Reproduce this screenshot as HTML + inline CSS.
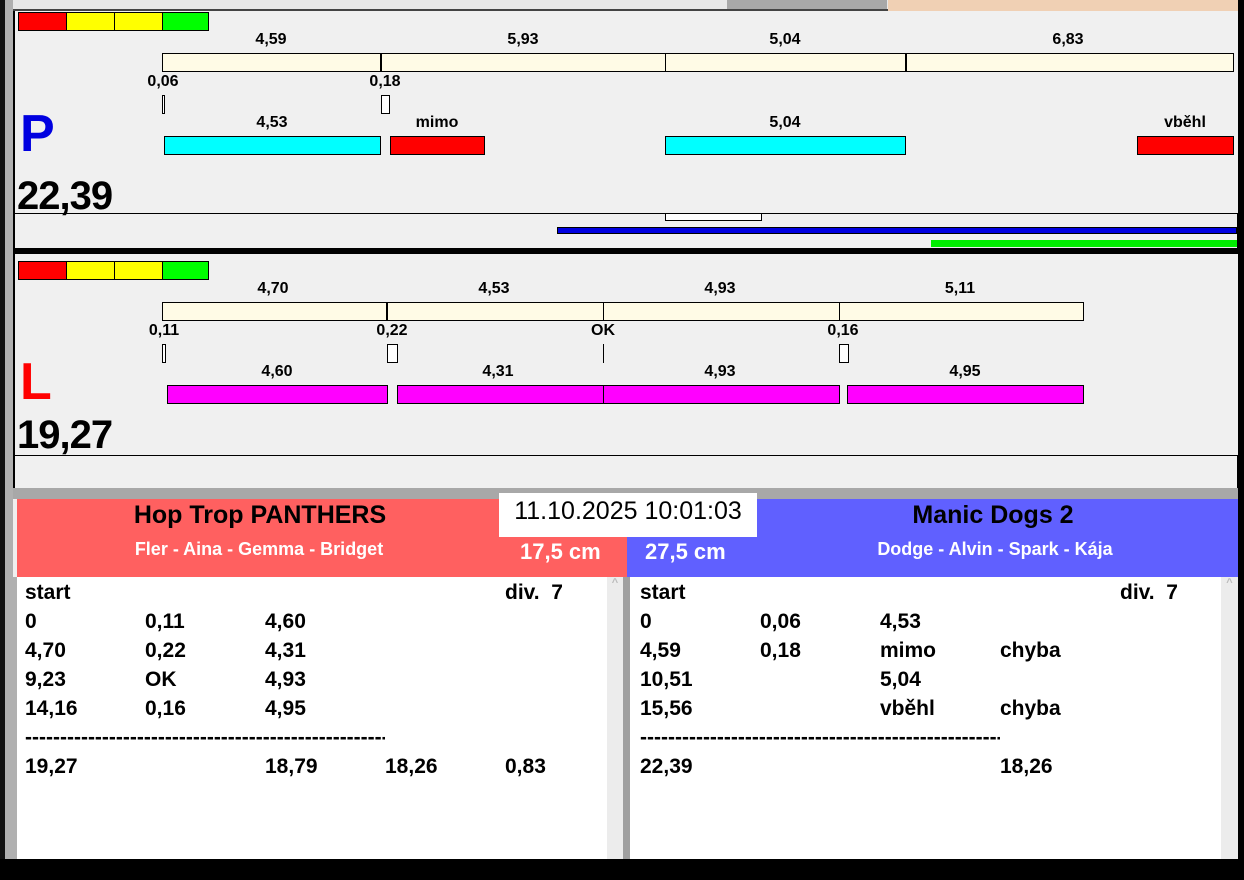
<!DOCTYPE html>
<html><head><meta charset="utf-8"><style>
*{margin:0;padding:0;box-sizing:border-box}
body{width:1244px;height:880px;overflow:hidden;background:#f0f0f0;position:relative;font-family:"Liberation Sans",Arial,sans-serif;font-weight:bold}
.a{position:absolute}
.t{position:absolute;font-size:16px;transform:translateX(-50%);white-space:nowrap;color:#000}
.r{position:absolute;border:1px solid #000}
.row{position:absolute;font-size:21px;white-space:nowrap}
</style></head><body>
<!-- top strip -->
<div class="a" style="left:0;top:0;width:1244px;height:11px;background:#e8e8e8"></div>
<div class="a" style="left:727px;top:0;width:160px;height:9px;background:#a8a8a8"></div>
<div class="a" style="left:888px;top:0;width:352px;height:11px;background:#f0d0b4"></div>
<div class="a" style="left:13px;top:9px;width:875px;height:2px;background:#444"></div>
<!-- left frame -->
<div class="a" style="left:0;top:0;width:5px;height:880px;background:#111"></div>
<div class="a" style="left:5px;top:0;width:8px;height:880px;background:#b0b0b0"></div>
<div class="a" style="left:13px;top:11px;width:2px;height:477px;background:#000"></div>
<div class="a" style="left:1238px;top:0;width:6px;height:880px;background:#000"></div>

<!-- panel P -->
<div class="r" style="left:18px;top:12px;width:49px;height:19px;background:#f00"></div>
<div class="r" style="left:66px;top:12px;width:49px;height:19px;background:#ff0"></div>
<div class="r" style="left:114px;top:12px;width:49px;height:19px;background:#ff0"></div>
<div class="r" style="left:162px;top:12px;width:47px;height:19px;background:#0f0"></div>

<div class="t" style="left:271px;top:31px">4,59</div>
<div class="t" style="left:523px;top:31px">5,93</div>
<div class="t" style="left:785px;top:31px">5,04</div>
<div class="t" style="left:1068px;top:31px">6,83</div>
<div class="r" style="left:162px;top:53px;width:1072px;height:19px;background:#fffbe6"></div>
<div class="a" style="left:380px;top:53px;width:2px;height:19px;background:#000"></div>
<div class="a" style="left:665px;top:53px;width:1px;height:19px;background:#000"></div>
<div class="a" style="left:905px;top:53px;width:2px;height:19px;background:#000"></div>
<div class="t" style="left:163px;top:73px">0,06</div>
<div class="t" style="left:385px;top:73px">0,18</div>
<div class="r" style="left:162px;top:95px;width:3px;height:19px;background:#fff"></div>
<div class="r" style="left:381px;top:95px;width:9px;height:19px;background:#fff"></div>
<div class="a" style="left:20px;top:104px;font-size:52px;color:#0000e0">P</div>
<div class="t" style="left:272px;top:114px">4,53</div>
<div class="t" style="left:437px;top:114px">mimo</div>
<div class="t" style="left:785px;top:114px">5,04</div>
<div class="t" style="left:1185px;top:114px">vběhl</div>
<div class="r" style="left:164px;top:136px;width:217px;height:19px;background:#0ff"></div>
<div class="r" style="left:390px;top:136px;width:95px;height:19px;background:#f00"></div>
<div class="r" style="left:665px;top:136px;width:241px;height:19px;background:#0ff"></div>
<div class="r" style="left:1137px;top:136px;width:97px;height:19px;background:#f00"></div>
<div class="a" style="left:17px;top:174px;font-size:40px;letter-spacing:-1px">22,39</div>
<div class="a" style="left:13px;top:213px;width:1225px;height:36px;border:1px solid #000;border-bottom:none"></div>
<div class="r" style="left:665px;top:213px;width:97px;height:8px;background:#fff"></div>
<div class="a" style="left:557px;top:227px;width:680px;height:7px;background:#0000e0;border:1px solid #000"></div>
<div class="a" style="left:931px;top:240px;width:306px;height:7px;background:#0e0"></div>
<div class="a" style="left:13px;top:248px;width:1225px;height:6px;background:#000"></div>

<!-- panel L -->
<div class="r" style="left:18px;top:261px;width:49px;height:19px;background:#f00"></div>
<div class="r" style="left:66px;top:261px;width:49px;height:19px;background:#ff0"></div>
<div class="r" style="left:114px;top:261px;width:49px;height:19px;background:#ff0"></div>
<div class="r" style="left:162px;top:261px;width:47px;height:19px;background:#0f0"></div>
<div class="t" style="left:273px;top:280px">4,70</div>
<div class="t" style="left:494px;top:280px">4,53</div>
<div class="t" style="left:720px;top:280px">4,93</div>
<div class="t" style="left:960px;top:280px">5,11</div>
<div class="r" style="left:162px;top:302px;width:922px;height:19px;background:#fffbe6"></div>
<div class="a" style="left:386px;top:302px;width:2px;height:19px;background:#000"></div>
<div class="a" style="left:603px;top:302px;width:1px;height:19px;background:#000"></div>
<div class="a" style="left:839px;top:302px;width:1px;height:19px;background:#000"></div>
<div class="t" style="left:164px;top:322px">0,11</div>
<div class="t" style="left:392px;top:322px">0,22</div>
<div class="t" style="left:603px;top:322px">OK</div>
<div class="t" style="left:843px;top:322px">0,16</div>
<div class="r" style="left:162px;top:344px;width:4px;height:19px;background:#fff"></div>
<div class="r" style="left:387px;top:344px;width:11px;height:19px;background:#fff"></div>
<div class="a" style="left:603px;top:344px;width:1px;height:19px;background:#000"></div>
<div class="r" style="left:839px;top:344px;width:10px;height:19px;background:#fff"></div>
<div class="a" style="left:20px;top:352px;font-size:52px;color:#f00">L</div>
<div class="t" style="left:277px;top:363px">4,60</div>
<div class="t" style="left:498px;top:363px">4,31</div>
<div class="t" style="left:720px;top:363px">4,93</div>
<div class="t" style="left:965px;top:363px">4,95</div>
<div class="r" style="left:167px;top:385px;width:221px;height:19px;background:#f0f"></div>
<div class="r" style="left:397px;top:385px;width:443px;height:19px;background:#f0f"></div>
<div class="a" style="left:603px;top:385px;width:1px;height:19px;background:#000"></div>
<div class="r" style="left:847px;top:385px;width:237px;height:19px;background:#f0f"></div>
<div class="a" style="left:17px;top:413px;font-size:40px;letter-spacing:-1px">19,27</div>
<div class="a" style="left:13px;top:455px;width:1225px;height:34px;border:1px solid #000;border-bottom:none"></div>

<!-- lower -->
<div class="a" style="left:13px;top:488px;width:1225px;height:11px;background:#a8a8a8"></div>
<div class="a" style="left:17px;top:499px;width:610px;height:78px;background:#ff6060"></div>
<div class="a" style="left:627px;top:499px;width:611px;height:78px;background:#6060ff"></div>
<div class="a" style="left:499px;top:493px;width:258px;height:44px;background:#fff;font-weight:normal;font-size:25px;text-align:center;line-height:36px">11.10.2025 10:01:03</div>
<div class="t" style="left:260px;top:501px;font-size:25px">Hop Trop PANTHERS</div>
<div class="t" style="left:259px;top:539px;font-size:18px;color:#fff">Fler - Aina - Gemma - Bridget</div>
<div class="a" style="left:520px;top:539px;font-size:22px;color:#fff">17,5 cm</div>
<div class="a" style="left:645px;top:539px;font-size:22px;color:#fff">27,5 cm</div>
<div class="t" style="left:993px;top:501px;font-size:25px">Manic Dogs 2</div>
<div class="t" style="left:995px;top:539px;font-size:18px;color:#fff">Dodge - Alvin - Spark - Kája</div>

<div class="a" style="left:13px;top:577px;width:4px;height:282px;background:#b0b0b0"></div>
<div class="a" style="left:17px;top:577px;width:590px;height:282px;background:#fff"></div>
<div class="a" style="left:607px;top:577px;width:16px;height:282px;background:#ececec;color:#bbb;font-size:11px;text-align:center">^</div>
<div class="a" style="left:623px;top:577px;width:7px;height:282px;background:#a0a0a0"></div>
<div class="a" style="left:630px;top:577px;width:591px;height:282px;background:#fff"></div>
<div class="a" style="left:1221px;top:577px;width:17px;height:282px;background:#ececec;color:#bbb;font-size:11px;text-align:center">^</div>
<div class="a" style="left:0;top:859px;width:1244px;height:21px;background:#000"></div>

<div class="row" style="left:25px;top:581px">start</div><div class="row" style="left:505px;top:581px">div.&nbsp; 7</div>
<div class="row" style="left:25px;top:610px">0</div><div class="row" style="left:145px;top:610px">0,11</div><div class="row" style="left:265px;top:610px">4,60</div>
<div class="row" style="left:25px;top:639px">4,70</div><div class="row" style="left:145px;top:639px">0,22</div><div class="row" style="left:265px;top:639px">4,31</div>
<div class="row" style="left:25px;top:668px">9,23</div><div class="row" style="left:145px;top:668px">OK</div><div class="row" style="left:265px;top:668px">4,93</div>
<div class="row" style="left:25px;top:697px">14,16</div><div class="row" style="left:145px;top:697px">0,16</div><div class="row" style="left:265px;top:697px">4,95</div>
<div class="row" style="left:25px;top:726px;width:360px;overflow:hidden">--------------------------------------------------------</div>
<div class="row" style="left:25px;top:755px">19,27</div><div class="row" style="left:265px;top:755px">18,79</div><div class="row" style="left:385px;top:755px">18,26</div><div class="row" style="left:505px;top:755px">0,83</div>

<div class="row" style="left:640px;top:581px">start</div><div class="row" style="left:1120px;top:581px">div.&nbsp; 7</div>
<div class="row" style="left:640px;top:610px">0</div><div class="row" style="left:760px;top:610px">0,06</div><div class="row" style="left:880px;top:610px">4,53</div>
<div class="row" style="left:640px;top:639px">4,59</div><div class="row" style="left:760px;top:639px">0,18</div><div class="row" style="left:880px;top:639px">mimo</div><div class="row" style="left:1000px;top:639px">chyba</div>
<div class="row" style="left:640px;top:668px">10,51</div><div class="row" style="left:880px;top:668px">5,04</div>
<div class="row" style="left:640px;top:697px">15,56</div><div class="row" style="left:880px;top:697px">vběhl</div><div class="row" style="left:1000px;top:697px">chyba</div>
<div class="row" style="left:640px;top:726px;width:360px;overflow:hidden">--------------------------------------------------------</div>
<div class="row" style="left:640px;top:755px">22,39</div><div class="row" style="left:1000px;top:755px">18,26</div>
</body></html>
